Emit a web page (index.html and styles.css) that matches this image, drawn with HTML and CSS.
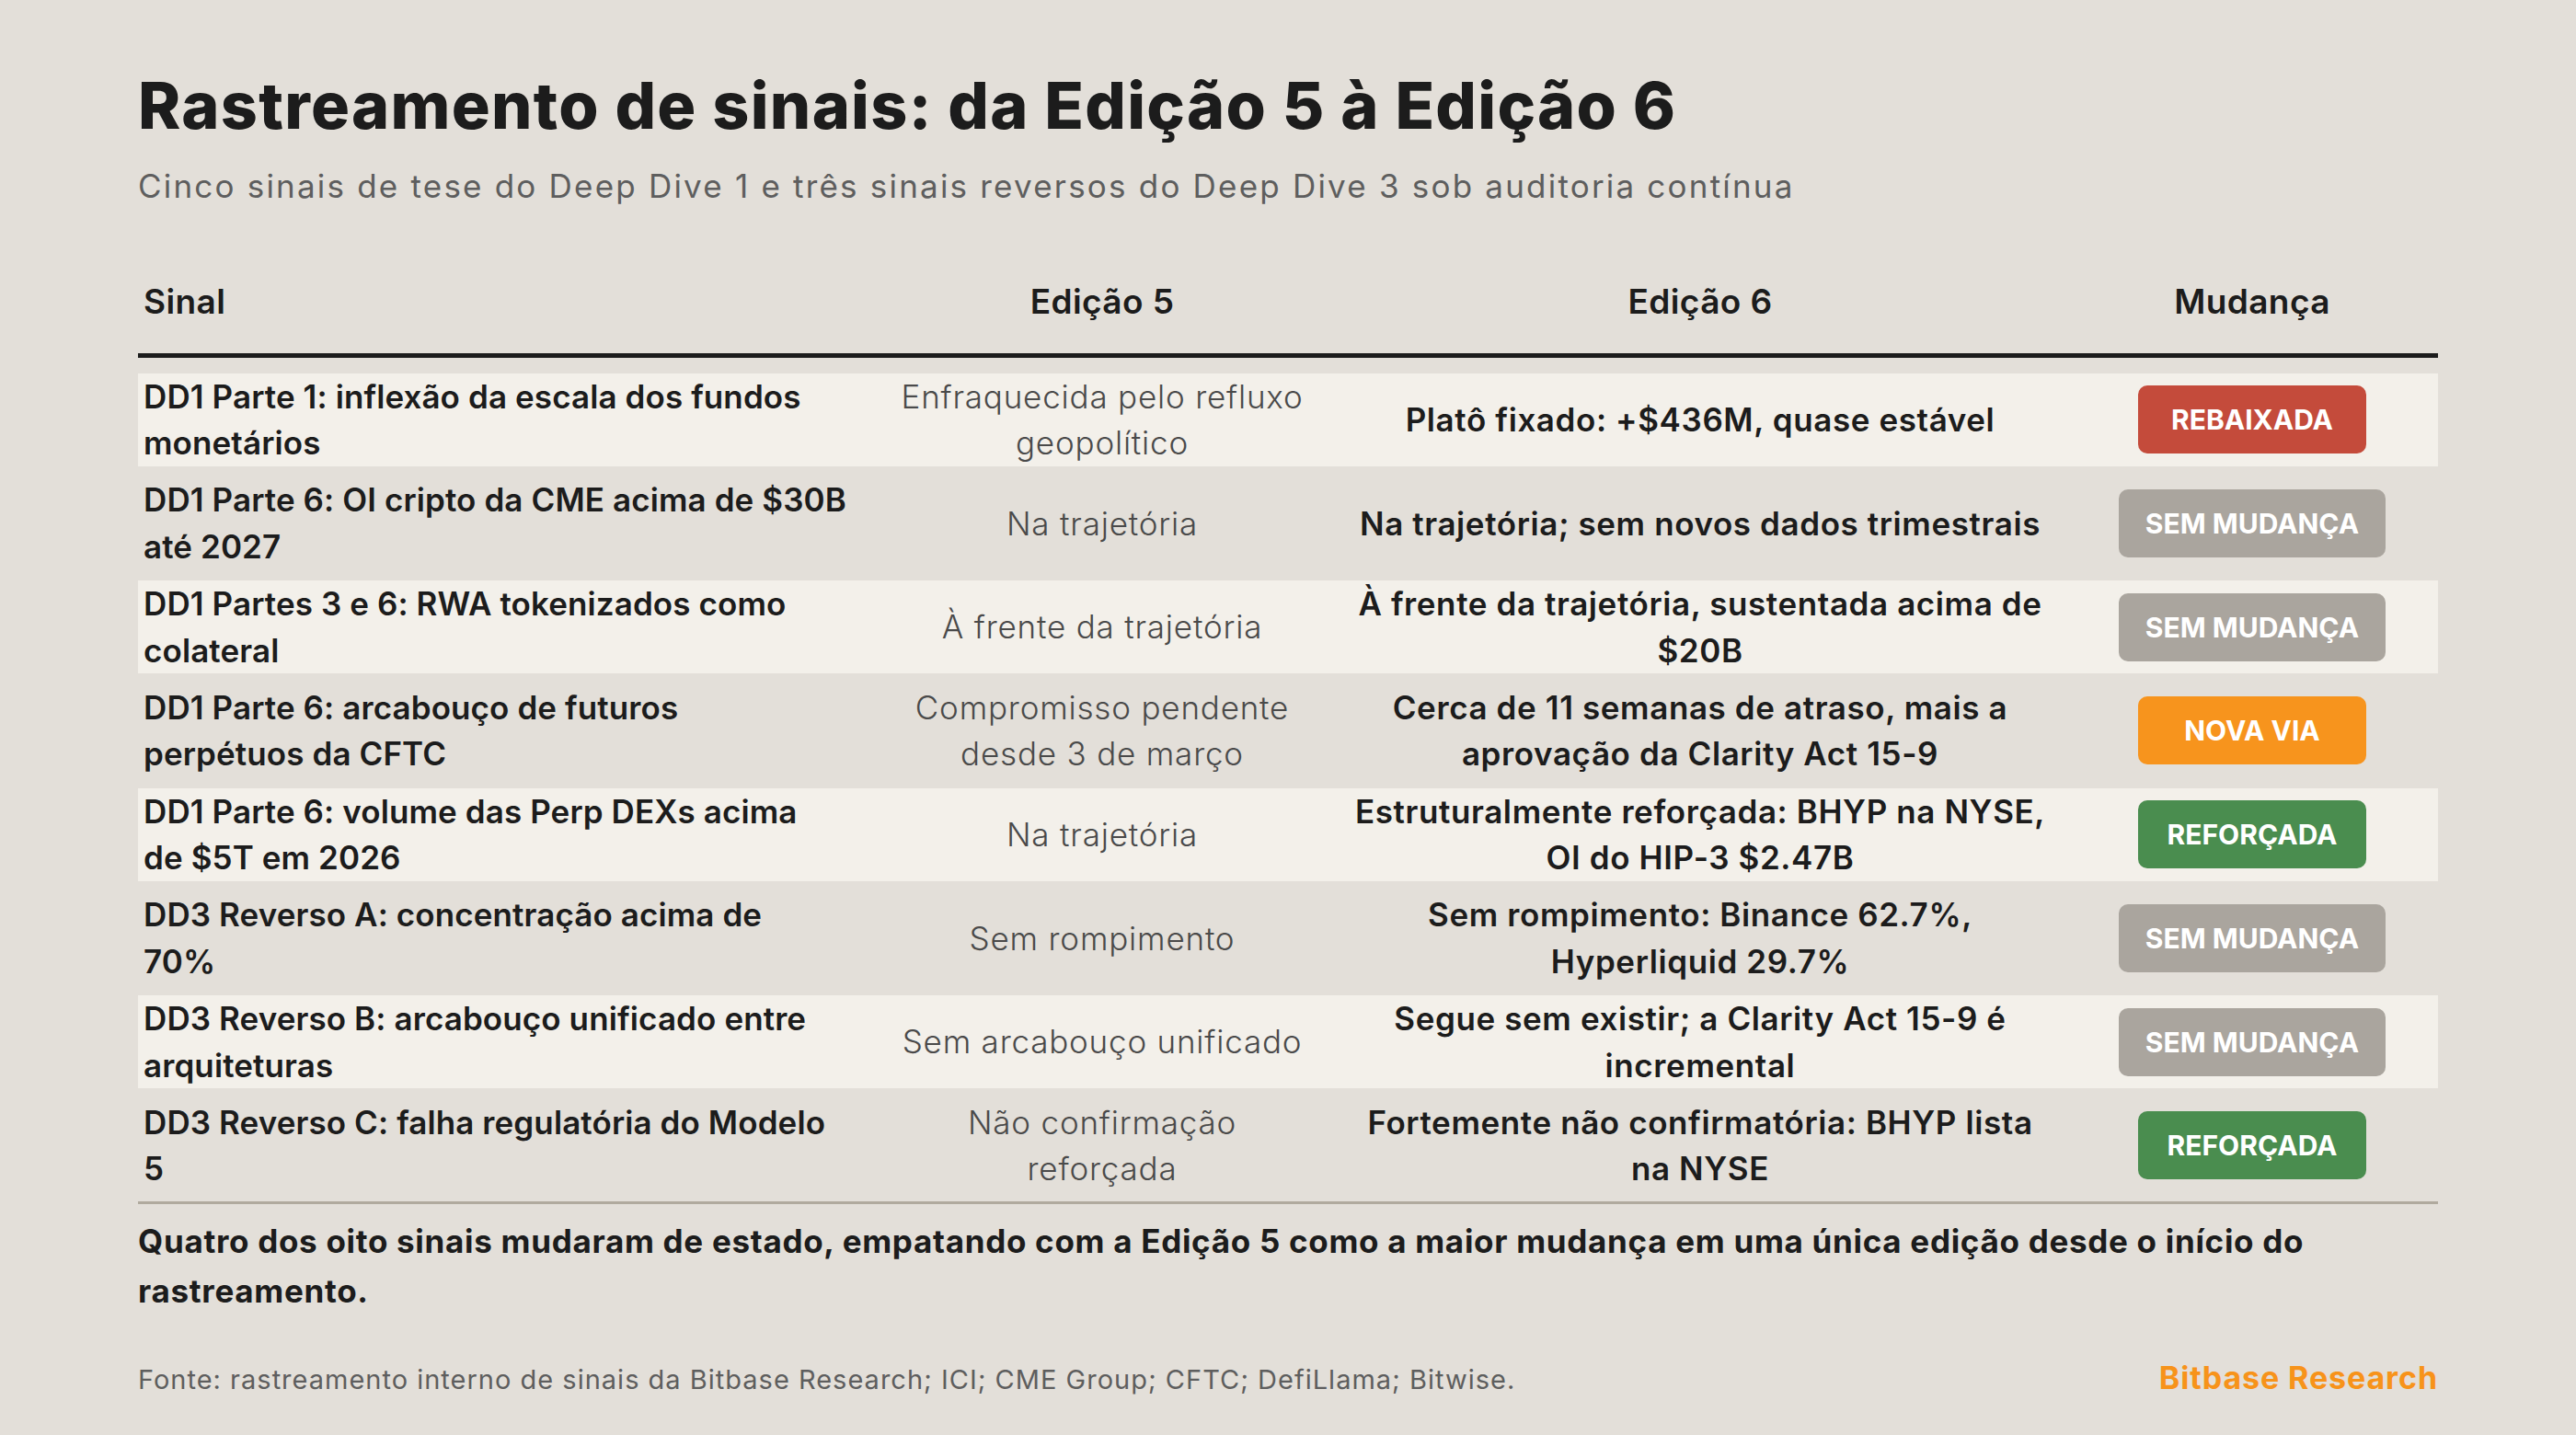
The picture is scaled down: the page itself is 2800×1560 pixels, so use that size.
FILE: index.html
```html
<!DOCTYPE html>
<html lang="pt">
<head>
<meta charset="utf-8">
<title>Rastreamento de sinais</title>
<link rel="stylesheet" href="styles.css">
</head>
<body>
<div class="page">
  <h1 class="title">Rastreamento de sinais: da Edição 5 à Edição 6</h1>
  <p class="subtitle">Cinco sinais de tese do Deep Dive 1 e três sinais reversos do Deep Dive 3 sob auditoria contínua</p>

  <div class="table">
    <div class="thead">
      <div class="th th-signal">Sinal</div>
      <div class="th">Edição 5</div>
      <div class="th">Edição 6</div>
      <div class="th">Mudança</div>
    </div>
    <div class="tbody">
      <div class="row alt">
        <div class="cell signal">DD1 Parte 1: inflexão da escala dos fundos monetários</div>
        <div class="cell prev">Enfraquecida pelo refluxo geopolítico</div>
        <div class="cell curr">Platô fixado: +$436M, quase estável</div>
        <div class="cell change"><span class="badge badge-down">REBAIXADA</span></div>
      </div>
      <div class="row">
        <div class="cell signal">DD1 Parte 6: OI cripto da CME acima de $30B até 2027</div>
        <div class="cell prev">Na trajetória</div>
        <div class="cell curr">Na trajetória; sem novos dados trimestrais</div>
        <div class="cell change"><span class="badge badge-same">SEM MUDANÇA</span></div>
      </div>
      <div class="row alt">
        <div class="cell signal">DD1 Partes 3 e 6: RWA tokenizados como colateral</div>
        <div class="cell prev">À frente da trajetória</div>
        <div class="cell curr">À frente da trajetória, sustentada acima de $20B</div>
        <div class="cell change"><span class="badge badge-same">SEM MUDANÇA</span></div>
      </div>
      <div class="row">
        <div class="cell signal">DD1 Parte 6: arcabouço de futuros<br>perpétuos da CFTC</div>
        <div class="cell prev">Compromisso pendente desde 3 de março</div>
        <div class="cell curr">Cerca de 11 semanas de atraso, mais a aprovação da Clarity Act 15-9</div>
        <div class="cell change"><span class="badge badge-new">NOVA VIA</span></div>
      </div>
      <div class="row alt">
        <div class="cell signal">DD1 Parte 6: volume das Perp DEXs acima<br>de $5T em 2026</div>
        <div class="cell prev">Na trajetória</div>
        <div class="cell curr">Estruturalmente reforçada: BHYP na NYSE, OI do HIP-3 $2.47B</div>
        <div class="cell change"><span class="badge badge-up">REFORÇADA</span></div>
      </div>
      <div class="row">
        <div class="cell signal">DD3 Reverso A: concentração acima de<br>70%</div>
        <div class="cell prev">Sem rompimento</div>
        <div class="cell curr">Sem rompimento: Binance 62.7%, Hyperliquid 29.7%</div>
        <div class="cell change"><span class="badge badge-same">SEM MUDANÇA</span></div>
      </div>
      <div class="row alt">
        <div class="cell signal">DD3 Reverso B: arcabouço unificado entre arquiteturas</div>
        <div class="cell prev">Sem arcabouço unificado</div>
        <div class="cell curr">Segue sem existir; a Clarity Act 15-9 é incremental</div>
        <div class="cell change"><span class="badge badge-same">SEM MUDANÇA</span></div>
      </div>
      <div class="row">
        <div class="cell signal">DD3 Reverso C: falha regulatória do Modelo<br>5</div>
        <div class="cell prev">Não confirmação reforçada</div>
        <div class="cell curr">Fortemente não confirmatória: BHYP lista na NYSE</div>
        <div class="cell change"><span class="badge badge-up">REFORÇADA</span></div>
      </div>
    </div>
  </div>

  <p class="summary">Quatro dos oito sinais mudaram de estado, empatando com a Edição 5 como a maior mudança em uma única edição desde o início do rastreamento.</p>

  <div class="footer">
    <span class="source">Fonte: rastreamento interno de sinais da Bitbase Research; ICI; CME Group; CFTC; DefiLlama; Bitwise.</span>
    <span class="brand">Bitbase Research</span>
  </div>
</div>
</body>
</html>
```

FILE: styles.css
```css
* {
  box-sizing: border-box;
  margin: 0;
  padding: 0;
}

html,
body {
  background: #e3dfd9;
}

body {
  width: 2800px;
  height: 1560px;
  overflow: hidden;
  font-family: "Inter", "Noto Sans", "Liberation Sans", sans-serif;
  color: #1c1c1c;
}

.page {
  padding: 74px 150px 0;
}

.title {
  font-size: 70px;
  font-weight: 800;
  line-height: 82px;
  letter-spacing: 1.3px;
}

.subtitle {
  margin-top: 24px;
  font-size: 35px;
  font-weight: 400;
  line-height: 44px;
  letter-spacing: 2.2px;
  color: #5e5e5e;
}

.table {
  margin-top: 76px;
}

.thead,
.row {
  display: grid;
  grid-template-columns: 796px 504px 796px 404px;
}

.thead {
  padding-bottom: 29px;
  border-bottom: 5px solid #1c1c1c;
  font-size: 37px;
  font-weight: 600;
  line-height: 55px;
  letter-spacing: 0.4px;
}

.th {
  text-align: center;
}

.th-signal {
  text-align: left;
  padding-left: 6px;
}

.tbody {
  display: flex;
  flex-direction: column;
  gap: 11.4px;
  padding: 16.7px 0 10.5px;
  border-bottom: 3px solid #b0aa9e;
}

.row {
  min-height: 101.3px;
  align-items: center;
  font-size: 35px;
  line-height: 50.65px;
}

.row.alt {
  background: #f3f0ea;
}

.cell.signal {
  padding: 0 20px 0 6px;
  font-weight: 600;
  letter-spacing: 0.1px;
}

.cell.prev {
  padding: 0 27px;
  text-align: center;
  font-weight: 300;
  letter-spacing: 0.8px;
  color: #4a4a4a;
}

.cell.curr {
  padding: 0 16px;
  text-align: center;
  font-weight: 600;
  letter-spacing: 0.6px;
}

.cell.change {
  display: flex;
  justify-content: center;
}

.badge {
  display: inline-flex;
  align-items: center;
  justify-content: center;
  height: 74px;
  min-width: 248px;
  padding: 0 29px;
  border-radius: 10px;
  font-size: 30px;
  font-weight: 700;
  line-height: 1;
  color: #ffffff;
}

.badge-down {
  background: #c44b3b;
}

.badge-same {
  background: #aaa59e;
}

.badge-new {
  background: #f7941d;
}

.badge-up {
  background: #4a8d4f;
}

.summary {
  margin-top: 14px;
  font-size: 35px;
  font-weight: 700;
  line-height: 53.4px;
  letter-spacing: 0.7px;
}

.footer {
  display: flex;
  justify-content: space-between;
  align-items: baseline;
  margin-top: 46px;
}

.source {
  font-size: 29px;
  line-height: 38px;
  letter-spacing: 1px;
  color: #5e5e5e;
}

.brand {
  font-size: 34px;
  font-weight: 700;
  line-height: 44px;
  letter-spacing: 0.9px;
  color: #f7931a;
}
```
